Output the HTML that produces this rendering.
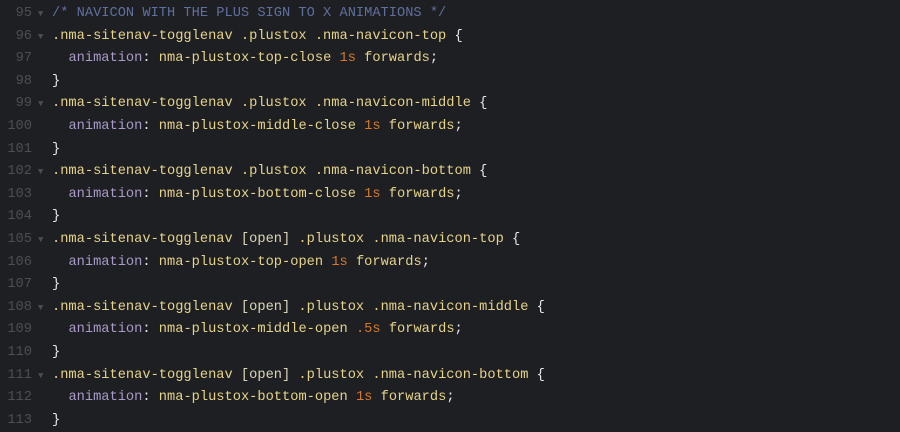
<!DOCTYPE html>
<html><head><style>
html,body{margin:0;padding:0;background:#1e1f22;width:900px;height:430px;overflow:hidden}
.w{position:absolute;top:3px;left:0;font-family:"Liberation Mono",monospace;font-size:13.7px;line-height:22.6px}
.l{position:relative;height:22.6px}
.n{position:absolute;left:0;width:32px;text-align:right;color:#4b4e54}
.a{position:absolute;left:38px;color:#4b4e54;font-size:9px}
.c{position:absolute;left:52px;color:#e6d38a;white-space:pre}
.cm{color:#5f6f9e}.p{color:#a99ac8}.o{color:#d6792a}.b{color:#e8e8e8}.t{color:#dcd6b8}
</style></head><body><div class="w"><div class="l"><span class="n">95</span><span class="a">▼</span><span class="c"><span class="cm">/* NAVICON WITH THE PLUS SIGN TO X ANIMATIONS */</span></span></div><div class="l"><span class="n">96</span><span class="a">▼</span><span class="c">.nma-sitenav-togglenav .plustox .nma-navicon-top <span class="b">{</span></span></div><div class="l"><span class="n">97</span><span class="c">  <span class="p">animation</span><span class="b">:</span> nma-plustox-top-close <span class="o">1s</span> forwards<span class="b">;</span></span></div><div class="l"><span class="n">98</span><span class="c"><span class="b">}</span></span></div><div class="l"><span class="n">99</span><span class="a">▼</span><span class="c">.nma-sitenav-togglenav .plustox .nma-navicon-middle <span class="b">{</span></span></div><div class="l"><span class="n">100</span><span class="c">  <span class="p">animation</span><span class="b">:</span> nma-plustox-middle-close <span class="o">1s</span> forwards<span class="b">;</span></span></div><div class="l"><span class="n">101</span><span class="c"><span class="b">}</span></span></div><div class="l"><span class="n">102</span><span class="a">▼</span><span class="c">.nma-sitenav-togglenav .plustox .nma-navicon-bottom <span class="b">{</span></span></div><div class="l"><span class="n">103</span><span class="c">  <span class="p">animation</span><span class="b">:</span> nma-plustox-bottom-close <span class="o">1s</span> forwards<span class="b">;</span></span></div><div class="l"><span class="n">104</span><span class="c"><span class="b">}</span></span></div><div class="l"><span class="n">105</span><span class="a">▼</span><span class="c">.nma-sitenav-togglenav <span class="t">[open]</span> .plustox .nma-navicon-top <span class="b">{</span></span></div><div class="l"><span class="n">106</span><span class="c">  <span class="p">animation</span><span class="b">:</span> nma-plustox-top-open <span class="o">1s</span> forwards<span class="b">;</span></span></div><div class="l"><span class="n">107</span><span class="c"><span class="b">}</span></span></div><div class="l"><span class="n">108</span><span class="a">▼</span><span class="c">.nma-sitenav-togglenav <span class="t">[open]</span> .plustox .nma-navicon-middle <span class="b">{</span></span></div><div class="l"><span class="n">109</span><span class="c">  <span class="p">animation</span><span class="b">:</span> nma-plustox-middle-open <span class="o">.5s</span> forwards<span class="b">;</span></span></div><div class="l"><span class="n">110</span><span class="c"><span class="b">}</span></span></div><div class="l"><span class="n">111</span><span class="a">▼</span><span class="c">.nma-sitenav-togglenav <span class="t">[open]</span> .plustox .nma-navicon-bottom <span class="b">{</span></span></div><div class="l"><span class="n">112</span><span class="c">  <span class="p">animation</span><span class="b">:</span> nma-plustox-bottom-open <span class="o">1s</span> forwards<span class="b">;</span></span></div><div class="l"><span class="n">113</span><span class="c"><span class="b">}</span></span></div></div></body></html>
